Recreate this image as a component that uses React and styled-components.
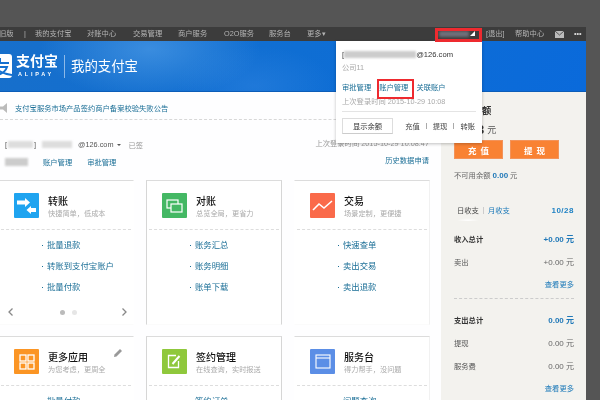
import React from "react";
import styled, { createGlobalStyle } from "styled-components";

const Global = createGlobalStyle`
  html, body { margin: 0; padding: 0; background: #555; }
  * { box-sizing: border-box; }
  body { font-family: "Liberation Sans", "Noto Sans CJK SC", sans-serif; font-size: 7.3px; color: #555; }
`;

const Page = styled.div`
  position: relative; width: 600px; height: 400px; overflow: hidden; background: #555;
  display: flex; flex-direction: column; filter: blur(0.35px);
`;
const TopBand = styled.div`height: 27px; flex: none;`;
const Site = styled.div`width: 586px; flex: 1; display: flex; flex-direction: column; background: #fff; min-height: 0;`;
const Nav = styled.nav`
  height: 14px; flex: none; background: #3c3c3c; color: #bbb; display: flex; align-items: center;
  font-size: 7.3px; line-height: 14px; position: relative;
`;
const NavItem = styled.span`
  position: absolute; left: ${p => p.$x}px; top: 0; white-space: nowrap; color: ${p => p.$c || "#b4b4b4"};
`;
const Hero = styled.header`
  height: 51px; flex: none; display: flex; align-items: center; color: #fff;
  background:
    radial-gradient(ellipse 110px 50px at 150px 8px, rgba(90,165,235,.55), transparent),
    radial-gradient(ellipse 80px 40px at 255px 45px, rgba(60,140,230,.35), transparent),
    linear-gradient(115deg, #176fcb 0%, #0f6ed3 50%, #0a6adb 100%);
  border-bottom: 1px solid #0c5db8;
`;
const LogoMark = styled.svg`width: 24px; height: 24px; margin-left: -12px; flex: none;`;
const LogoText = styled.div`margin-left: 4px; display: flex; flex-direction: column; align-items: flex-start; width: 44px;`;
const LogoCn = styled.div`font-size: 14px; font-weight: 700; line-height: 15px;`;
const LogoEn = styled.div`font-size: 5.5px; line-height: 7px; letter-spacing: 2.8px; font-weight: 700; margin: 2px 0 0 2px;`;
const HeroDivider = styled.div`width: 1px; height: 23px; background: rgba(255,255,255,.5); margin: 0 6px 0 4px;`;
const HeroTitle = styled.div`font-size: 13.4px; line-height: 16px; margin-top: 2px;`;

const Body = styled.div`flex: 1; display: flex; min-height: 0; overflow: hidden;`;
const Main = styled.main`width: 441px; flex: none; background: #fefeff; display: flex; flex-direction: column;`;
const Notice = styled.div`
  height: 28px; flex: none; border-bottom: 1px dashed #d8d8d8; display: flex; align-items: center; gap: 4px;
  padding-top: 5px; color: #1a6e96;
`;
const Speaker = styled.svg`width: 8px; height: 10px; flex: none; margin-right: 3px;`;
const Account = styled.div`height: 60px; flex: none; padding: 19px 12px 0 5px; display: flex; justify-content: space-between;`;
const AccountCol = styled.div`
  display: flex; flex-direction: column; gap: 6px; align-items: ${p => p.$end ? "flex-end" : "flex-start"};
  margin-top: ${p => p.$end ? "-2px" : 0};
`;
const Line = styled.div`display: flex; align-items: center; height: 11px; white-space: nowrap; gap: ${p => p.$gap || 0}px;`;
const Smudge = styled.span`
  display: inline-block; width: ${p => p.$w}px; height: ${p => p.$h || 7}px; margin: 0 ${p => p.$m || 0}px;
  background: ${p => p.$c || "#ddd"}; filter: blur(1px);
`;
const A = styled.span`color: #1a6e96; white-space: nowrap;`;
const Caret = styled.span`width: 0; height: 0; border: 2.5px solid transparent; border-top-color: #555; border-bottom: 0; margin-left: 4px;`;
const Faint = styled.span`color: #999; white-space: nowrap;`;
const Dark = styled.span`color: #555; white-space: nowrap;`;

const Grid = styled.div`
  margin-left: -10px; display: grid; grid-template-columns: 144px 136px 136px; grid-template-rows: 145px 145px;
  column-gap: 12px; row-gap: 11px;
`;
const Card = styled.section`
  position: relative; border: 1px solid #d6d6d6; border-top-color: #dcdcdc; border-bottom-color: #fbfbfb; background: #fff;
  padding-left: 15px;
  &:nth-child(3n+1) { padding-left: 23px; border-right-color: transparent; }
  &:nth-child(3n) { border-left-color: transparent; border-right-color: #f1f1f1; }
`;
const CardHead = styled.div`display: flex; gap: 9px; padding-top: 12px; height: 48px;`;
const Dash = styled.div`height: 0; border-top: 1px dashed #ddd; margin: 0 2px 0 -13px;`;
const IconBox = styled.div`
  width: 25px; height: 25px; flex: none; background: ${p => p.$bg}; border-radius: 1px; display: flex; align-items: center; justify-content: center;
`;
const CardTitleWrap = styled.div`display: flex; flex-direction: column; padding-top: 2px;`;
const CardTitle = styled.div`font-size: 10px; line-height: 13px; font-weight: 500; color: #111;`;
const CardSub = styled.div`font-size: 7.2px; line-height: 12px; color: #aaa; white-space: nowrap;`;
const Links = styled.ul`list-style: none; margin: 5px 0 0 28px; padding: 0;`;
const LinkItem = styled.li`
  position: relative; height: 21px; line-height: 21px; font-size: 8.4px; color: #1a6e96; white-space: nowrap; padding-left: 5px;
  &::before { content: ""; position: absolute; left: 0; top: 10px; width: 1px; height: 1px; background: #1a6e96; }
`;
const Pager = styled.div`position: absolute; left: 17px; right: 6px; bottom: 8px; display: flex; justify-content: space-between; align-items: center;`;
const Dots = styled.div`display: flex; gap: 7px; align-items: center; margin-left: 2px;`;
const Dot = styled.span`width: 5px; height: 5px; border-radius: 50%; background: ${p => p.$on ? "#bbb" : "#e6e6e6"};`;
const Pencil = styled.svg`position: absolute; right: 10px; top: 11px; width: 9px; height: 9px;`;

const Side = styled.aside`width: 145px; flex: none; background: #f3f2ee; padding: 13px 12px 0 13px; display: flex; flex-direction: column;`;
const SideTitle = styled.div`font-size: 9.3px; line-height: 12px; font-weight: 700; color: #333;`;
const Balance = styled.div`font-size: 9px; height: 30px; display: flex; align-items: center; padding-top: 5px; padding-left: 5px; color: #555; gap: 3px;`;
const BalanceNum = styled.b`font-size: 13px; color: #333;`;
const Buttons = styled.div`display: flex; gap: 7px; margin-top: 3px;`;
const OrangeBtn = styled.div`
  width: 49px; height: 19px; background: #f98233; color: #fff; font-size: 8.5px; font-weight: 700; letter-spacing: 4px; padding-left: 4px;
  display: flex; align-items: center; justify-content: center; border: 1px solid #f3935a;
`;
const Unavail = styled.div`margin-top: 11px; height: 11px; line-height: 11px; color: #666; white-space: nowrap;`;
const Num = styled.b`color: #1f78b8; font-weight: 700; font-size: 8px;`;
const Tabs = styled.div`display: flex; align-items: center; margin-top: 24px; height: 12px; padding-left: 3px;`;
const Tab = styled.span`
  position: relative; color: ${p => p.$on ? "#444" : "#1a78b8"}; white-space: nowrap;
  ${p => p.$on && `&::after { content: ""; position: absolute; left: 0; right: 0; top: 13px; height: 3px; background: radial-gradient(ellipse 50% 100% at 50% 100%, #fff, transparent); }`}
`;
const TabSep = styled.span`width: 1px; height: 7px; background: #ccc; margin: 0 4px;`;
const TabDate = styled.b`margin-left: auto; color: #1f82c4; font-size: 8px; letter-spacing: .5px;`;
const Row = styled.div`display: flex; justify-content: space-between; align-items: center; height: 23px; white-space: nowrap; color: ${p => p.$strong ? "#333" : "#555"}; font-weight: ${p => p.$strong ? 700 : 400};`;
const Amount = styled.span`color: ${p => p.$blue ? "#1f78b8" : "#666"}; font-size: 8px; font-weight: ${p => p.$blue ? 700 : 400};`;
const More = styled.div`height: 23px; line-height: 23px; text-align: right; color: #1a78b8;`;
const SideDash = styled.div`border-top: 1px dashed #ccc; margin: 2px 0 9px;`;
const Rows = styled.div`margin-top: 12px;`;

const Popover = styled.div`
  position: absolute; left: 336px; top: 41px; width: 146px; height: 102px; background: #fff; padding: 7px 6px 0 6px;
  box-shadow: 0 1px 3px rgba(0,0,0,.25); color: #666;
`;
const PopEmail = styled.div`display: flex; align-items: center; height: 12px; color: #333; font-size: 7.6px; font-weight: 500;`;
const PopCompany = styled.div`height: 12px; line-height: 12px; margin-top: 2px; color: #aaa;`;
const PopLinks = styled.div`display: flex; gap: 8px; margin-top: 8px; height: 12px; line-height: 12px;`;
const PopLogin = styled.div`margin-top: 2px; height: 12px; line-height: 12px; color: #aaa; white-space: nowrap;`;
const PopRule = styled.div`border-top: 1px solid #e4e4e4; margin-top: 3px;`;
const PopFoot = styled.div`display: flex; align-items: center; justify-content: space-between; margin-top: 6px; padding-right: 1px;`;
const Ghost = styled.div`width: 51px; height: 16px; border: 1px solid #ddd; color: #333; display: flex; align-items: center; justify-content: center; border-bottom-color: #ccc;`;
const PopActions = styled.div`display: flex; align-items: center; color: #444; gap: 6px;`;
const ActSep = styled.span`width: 1px; height: 6px; background: #aaa;`;
const RedBox = styled.div`
  position: absolute; left: ${p => p.$x}px; top: ${p => p.$y}px; width: ${p => p.$w}px; height: ${p => p.$h}px; border: ${p => p.$b}px solid #ee2a2f;
`;
const NavUser = styled.span`position: absolute; left: 439px; top: 4px; width: 30px; height: 6px; background: #70707a; filter: blur(1.5px);`;
const Tri = styled.span`position: absolute; left: 470px; top: 4px; border-left: 5px solid transparent; border-bottom: 5px solid #fff;`;

const cards = [
  { t: "转账", s: "快捷简单，低成本", bg: "#1fa4f0", l: ["批量退款", "转账到支付宝账户", "批量付款"], pager: true,
    i: <svg width="19" height="16" viewBox="0 0 19 16" fill="#fff"><path d="M0 2.500h8V0l5 4.500L8 9V6.500H0z" /><path d="M19 10h-5V8l-4.500 4 4.500 4v-2h5z" /></svg> },
  { t: "对账", s: "总览全局，更省力", bg: "#44b864", l: ["账务汇总", "账务明细", "账单下载"],
    i: <svg width="17" height="14" viewBox="0 0 17 14" fill="none" stroke="#fff" strokeWidth="1.200"><rect x="1" y="1" width="11" height="8" /><rect x="5" y="5" width="11" height="8" fill="#44b864" /></svg> },
  { t: "交易", s: "场景定制，更便捷", bg: "#fa6a4a", l: ["快速查单", "卖出交易", "卖出退款"],
    i: <svg width="21" height="12" viewBox="0 0 21 12" fill="none" stroke="#fff" strokeWidth="1.600"><path d="M1 10l6-6 5 4 8-7" /></svg> },
  { t: "更多应用", s: "为您考虑，更周全", bg: "#fb9524", l: ["批量付款"], edit: true,
    i: <svg width="16" height="16" viewBox="0 0 16 16" fill="none" stroke="#fff" strokeWidth="1.300"><rect x="1" y="1" width="6" height="6" /><rect x="9" y="1" width="6" height="6" /><rect x="1" y="9" width="6" height="6" /><rect x="9" y="9" width="6" height="6" /></svg> },
  { t: "签约管理", s: "在线查询，实时报送", bg: "#8fc83c", l: ["签约订单"],
    i: <svg width="15" height="15" viewBox="0 0 15 15" fill="none" stroke="#fff" strokeWidth="1.300"><path d="M9 1.500H1.500v12h10V7" /><path d="M5.500 10l7-8" strokeWidth="2" /></svg> },
  { t: "服务台", s: "得力帮手，没问题", bg: "#5b8ee6", l: ["问题查询"],
    i: <svg width="16" height="15" viewBox="0 0 16 15" fill="none" stroke="#fff" strokeWidth="1.100"><rect x="1" y="1" width="14" height="13" /><path d="M1 4h14" /></svg> },
];

export default function App() {
  return (
    <Page>
      <Global />
      <TopBand />
      <Site>
        <Nav>
          {[["旧版", -1], ["|", 24], ["我的支付宝", 35], ["对账中心", 87], ["交易管理", 133], ["商户服务", 178], ["O2O服务", 224], ["服务台", 269], ["更多▾", 307], ["[退出]", 486], ["帮助中心", 515]].map(([t, x]) => <NavItem key={t} $x={x}>{t}</NavItem>)}
          <NavUser /><Tri />
          <NavItem $x={555}><svg width="9" height="7" viewBox="0 0 9 7" style={{ marginTop: 3.5, display: "block" }}><rect width="9" height="7" fill="#bbb" /><path d="M0 0l4.500 4L9 0" fill="none" stroke="#555" /></svg></NavItem>
          <NavItem $x={574} $c="#ddd">•••</NavItem>
        </Nav>
        <Hero>
          <LogoMark viewBox="0 0 24 24"><rect width="24" height="24" rx="3" fill="#fff" /><path d="M3 9h18M12 4v5M6 13h13c-2 6-7 8-14 9M8 14c3 4 8 6 16 7" stroke="#1470d0" strokeWidth="2" fill="none" /></LogoMark>
          <LogoText><LogoCn>支付宝</LogoCn><LogoEn>ALIPAY</LogoEn></LogoText>
          <HeroDivider />
          <HeroTitle>我的支付宝</HeroTitle>
        </Hero>
        <Body>
          <Main>
            <Notice>
              <Speaker viewBox="0 0 8 10"><path d="M0 3.500h3L7 0v10L3 6.500H0z" fill="#bbb" /></Speaker>
              支付宝服务市场产品签约商户备案校验失败公告
            </Notice>
            <Account>
              <AccountCol>
                <Line>[<Smudge $w={25} $m={1} />]<Smudge $w={30} $m={6} /><Dark>@126.com</Dark><Caret /><Faint style={{ marginLeft: 7 }}>已签</Faint></Line>
                <Line $gap={6}><Smudge $w={23} $h={8} $c="#ccc" /><span style={{ width: 3 }} /><A>账户管理</A><span style={{ width: 3 }} /><A>审批管理</A></Line>
              </AccountCol>
              <AccountCol $end>
                <Line><Faint>上次登录时间 2015-10-29 10:08:47</Faint></Line>
                <Line><A>历史数据申请</A></Line>
              </AccountCol>
            </Account>
            <Grid>
              {cards.map(c => (
                <Card key={c.t}>
                  <CardHead>
                    <IconBox $bg={c.bg}>{c.i}</IconBox>
                    <CardTitleWrap><CardTitle>{c.t}</CardTitle><CardSub>{c.s}</CardSub></CardTitleWrap>
                  </CardHead>
                  <Dash />
                  <Links>{c.l.map(x => <LinkItem key={x}>{x}</LinkItem>)}</Links>
                  {c.pager && (
                    <Pager>
                      <svg width="5" height="8" viewBox="0 0 5 8" fill="none" stroke="#888" strokeWidth="1.300"><path d="M4.500 .5L1 4l3.500 3.500" /></svg>
                      <Dots><Dot $on /><Dot /></Dots>
                      <svg width="5" height="8" viewBox="0 0 5 8" fill="none" stroke="#888" strokeWidth="1.300"><path d="M.5 .5L4 4 .5 7.500" /></svg>
                    </Pager>
                  )}
                  {c.edit && <Pencil viewBox="0 0 9 9"><path d="M0 9l.5-2.500L6 1l2 2-5.500 5.500z" fill="#999" /></Pencil>}
                </Card>
              ))}
            </Grid>
          </Main>
          <Side>
            <SideTitle>账户余额</SideTitle>
            <Balance><BalanceNum>0.03</BalanceNum>元</Balance>
            <Buttons><OrangeBtn>充值</OrangeBtn><OrangeBtn>提现</OrangeBtn></Buttons>
            <Unavail>不可用余额 <Num>0.00</Num> 元</Unavail>
            <Tabs><Tab $on>日收支</Tab><TabSep /><Tab>月收支</Tab><TabDate>10/28</TabDate></Tabs>
            <Rows>
              <Row $strong>收入总计<Amount $blue>+0.00 元</Amount></Row>
              <Row>卖出<Amount>+0.00 元</Amount></Row>
              <More>查看更多</More>
              <SideDash />
              <Row $strong>支出总计<Amount $blue>0.00 元</Amount></Row>
              <Row>提现<Amount>0.00 元</Amount></Row>
              <Row>服务费<Amount>0.00 元</Amount></Row>
              <More>查看更多</More>
            </Rows>
          </Side>
        </Body>
      </Site>
      <Popover>
        <PopEmail>[<Smudge $w={72} $c="#ccc" />@126.com</PopEmail>
        <PopCompany>公司11</PopCompany>
        <PopLinks><A>审批管理</A><A>账户管理</A><A>关联账户</A></PopLinks>
        <PopLogin>上次登录时间 2015-10-29 10:08</PopLogin>
        <PopRule />
        <PopFoot><Ghost>显示余额</Ghost><PopActions>充值<ActSep />提现<ActSep />转账</PopActions></PopFoot>
      </Popover>
      <RedBox $x={435} $y={28} $w={47} $h={14} $b={3} />
      <RedBox $x={377} $y={79} $w={37} $h={20} $b={2} />
    </Page>
  );
}
